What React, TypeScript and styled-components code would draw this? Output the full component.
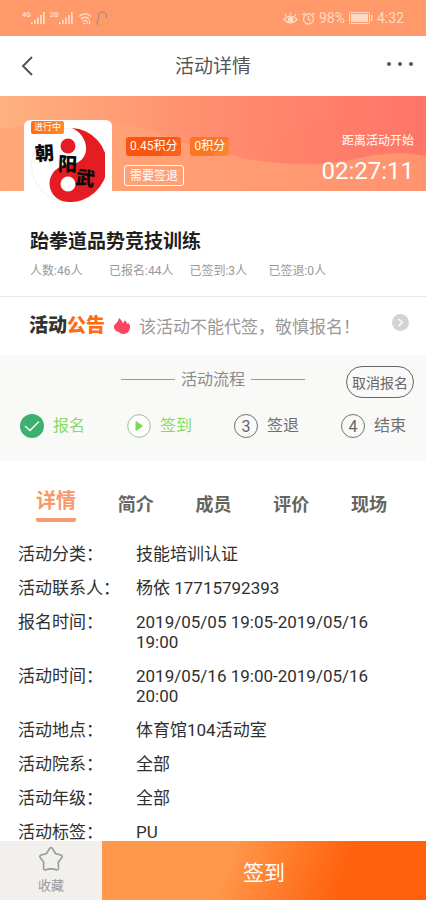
import React from 'react';
import styled, { createGlobalStyle } from 'styled-components';

const Global = createGlobalStyle`
  * { box-sizing: border-box; }
  body { margin: 0; background: #fff; }
  body, button { font-family: Roboto, "Noto Sans CJK SC", sans-serif; }
  button { border: 0; padding: 0; background: none; cursor: pointer; }
  h1, h2, p, dl, dd, dt, ol, ul { margin: 0; padding: 0; }
  svg { display: block; flex: none; }
`;

const Screen = styled.div`
  height: 100vh;
  display: flex;
  flex-direction: column;
`;

const StatusBar = styled.div`
  flex: none;
  display: flex;
  justify-content: space-between;
  align-items: center;
  height: 36px;
  padding: 0 22px;
  background: #ff996a;
  color: #ffd9c2;
  font-size: 14px;
  line-height: 20px;
`;

const StatusGroup = styled.div<{ $gap: number }>`
  display: flex;
  align-items: center;
  gap: ${(p) => p.$gap}px;
`;

const Signal = styled.span`
  display: flex;
  align-items: flex-start;
  font-size: 7px;
  line-height: 8px;
  font-weight: 700;
`;

const Header = styled.header`
  flex: none;
  display: grid;
  grid-template-columns: 60px 1fr 60px;
  align-items: center;
  height: 60px;
  padding: 0 12px;
  color: #555;
`;

const Title = styled.h1`
  padding-top: 2px;
  text-align: center;
  font-size: 19px;
  line-height: 28px;
  font-weight: 400;
`;

const IconButton = styled.button<{ $end?: boolean }>`
  display: flex;
  justify-content: ${(p) => (p.$end ? 'flex-end' : 'flex-start')};
  padding: 8px 0;
  color: #555;
`;

const Content = styled.main`
  flex: 1;
  min-height: 0;
  overflow-y: auto;
  scrollbar-width: none;
`;

const Banner = styled.section`
  position: relative;
  display: flex;
  align-items: flex-start;
  height: 95px;
  padding: 24px 12px 0 24px;
  color: #fff;
`;

const Waves = styled.svg`
  position: absolute;
  inset: 0;
  width: 100%;
  height: 100%;
`;

const Cover = styled.div`
  position: relative;
  flex: none;
  width: 88px;
  height: 88px;
  padding: 8px 7px;
  border-radius: 6px;
  background: #fff;
`;

const StateTag = styled.span`
  position: absolute;
  top: 1px;
  left: 7px;
  width: 33px;
  height: 13px;
  border-radius: 2px;
  background: linear-gradient(90deg, #ff6c14, #ff8a2c);
  font-size: 9px;
  line-height: 13px;
  text-align: center;
`;

const Badges = styled.div`
  position: relative;
  flex: 1;
  display: grid;
  justify-items: start;
  gap: 9px;
  padding: 17px 0 0 12px;
`;

const Credits = styled.div`
  display: flex;
  gap: 9px;
  padding-left: 2px;
`;

const Credit = styled.span<{ $from: string; $to: string }>`
  height: 19px;
  padding: 0 4px;
  border-radius: 3px;
  background: linear-gradient(135deg, ${(p) => p.$from} 70%, ${(p) => p.$to} 71%);
  font-size: 12px;
  line-height: 19px;
  white-space: nowrap;
`;

const Requirement = styled.span`
  height: 21px;
  padding: 0 5px;
  border: 1px solid #fff;
  border-radius: 3px;
  font-size: 12px;
  line-height: 20px;
`;

const Countdown = styled.div`
  position: relative;
  text-align: right;
  padding-top: 12px;
  font-size: 12px;
  line-height: 18px;
`;

const Time = styled.div`
  font-size: 24px;
  line-height: 28px;
  padding-top: 7px;
`;

const Summary = styled.section`
  padding: 37px 30px 16px;
  border-bottom: 1px solid #e9e9e9;
`;

const ActivityName = styled.h2`
  color: #1f1f1f;
  font-size: 19px;
  line-height: 28px;
  font-weight: 700;
`;

const Counts = styled.ul`
  display: flex;
  gap: 16px;
  padding-top: 6px;
  list-style: none;
  color: #999;
  font-size: 12px;
  line-height: 18px;
`;

const Count = styled.li`
  min-width: 63px;
`;

const Notice = styled.section`
  display: flex;
  align-items: center;
  height: 58px;
  padding: 0 17px 0 29px;
  color: #999;
`;

const NoticeTitle = styled.strong`
  color: #333;
  font-size: 19px;
  line-height: 28px;
  font-weight: 900;
  em { color: #ff6b12; font-style: normal; }
`;

const NoticeText = styled.p`
  flex: 1;
  padding: 2px 0 0 8px;
  font-size: 17px;
  line-height: 24px;
`;

const Flow = styled.section`
  padding: 10px 12px 23px;
  background: #f9f9f8;
`;

const FlowHead = styled.div`
  display: grid;
  grid-template-columns: 68px 1fr 68px;
  align-items: center;
`;

const FlowTitle = styled.div`
  grid-column: 2;
  display: flex;
  justify-content: center;
  align-items: center;
  gap: 6px;
  padding-bottom: 4px;
  color: #8a8a8a;
  font-size: 16px;
  line-height: 24px;
  &::before, &::after {
    content: "";
    width: 54px;
    height: 1px;
    background: #999;
  }
`;

const CancelButton = styled.button`
  height: 32px;
  margin: 1px 0 0;
  border: 1px solid #666;
  border-radius: 16px;
  color: #666;
  font-size: 14px;
  white-space: nowrap;
`;

const Steps = styled.ol`
  display: flex;
  justify-content: space-between;
  padding: 16px 8px 0;
  list-style: none;
`;

const Step = styled.li<{ $active?: boolean }>`
  display: flex;
  align-items: center;
  gap: 9px;
  color: ${(p) => (p.$active ? '#86dc60' : '#707070')};
  font-size: 16px;
  line-height: 24px;
`;

const StepMark = styled.span`
  display: grid;
  place-items: center;
  width: 24px;
  height: 24px;
  border: 1px solid #707070;
  border-radius: 50%;
  color: #666;
`;

const Tabs = styled.nav`
  display: flex;
  justify-content: space-between;
  align-items: center;
  padding: 24px 39px 0 36px;
`;

const Tab = styled.button<{ $active?: boolean }>`
  height: 37px;
  border-bottom: 4px solid ${(p) => (p.$active ? '#f49a70' : 'transparent')};
  border-radius: 2px;
  padding: ${(p) => (p.$active ? '0 0 2px' : '7px 0 0')};
  color: ${(p) => (p.$active ? '#f7996b' : '#66655d')};
  font-size: ${(p) => (p.$active ? 20 : 18)}px;
  line-height: 26px;
  font-weight: 700;
`;

const Details = styled.dl`
  display: grid;
  gap: 14px;
  padding: 22px 18px 14px;
  color: #303030;
  font-size: 17px;
  line-height: 20px;
`;

const Detail = styled.div`
  display: grid;
  grid-template-columns: 118px 1fr;
  dt { white-space: nowrap; }
`;

const Footer = styled.footer`
  flex: none;
  display: grid;
  grid-template-columns: 24% 1fr;
  height: 59px;
`;

const FavoriteButton = styled.button`
  display: flex;
  flex-direction: column;
  align-items: center;
  gap: 4px;
  padding-top: 5px;
  background: #f1f0ed;
  color: #999;
  font-size: 13px;
  line-height: 20px;
`;

const SignButton = styled.button`
  background: linear-gradient(110deg, #ff984b 38%, #ff610c 74%);
  color: #fff;
  font-size: 21px;
`;

const SignalBars = () => (
  <svg width="15" height="14" viewBox="0 0 15 14" fill="currentColor">
    <path d="M0 11h1.600v2H0zM3 9h1.800v4H3zM6 6.500h1.800V13H6zM9 4h1.800v9H9zM12 1h1.800v12H12z" />
  </svg>
);

const YinYang = () => (
  <svg width="74" height="74" viewBox="0 0 74 74" role="img" aria-label="朝阳武">
    <circle cx="37" cy="37" r="36.500" fill="#fff" stroke="#f3f1f1" />
    <path d="M41 0A37 37 0 0 1 37 74A18.500 18.500 0 0 1 37 37C62 35 59 8 41 0Z" fill="#e51d23" />
    <circle cx="37" cy="18" r="7.500" fill="#e51d23" />
    <circle cx="37" cy="56" r="7.500" fill="#fff" />
    <g fill="#0b0b0b" fontFamily='"Noto Sans CJK SC", sans-serif' fontWeight="900" fontSize="19">
      <text x="4" y="32" transform="rotate(-4 14 25)">朝</text>
      <text x="27" y="43" transform="rotate(3 36 36)">阳</text>
      <text x="45" y="57" transform="rotate(8 54 50)">武</text>
    </g>
  </svg>
);

const details = [
  ['活动分类：', '技能培训认证'],
  ['活动联系人：', '杨依 17715792393'],
  ['报名时间：', '2019/05/05 19:05-2019/05/16 19:00'],
  ['活动时间：', '2019/05/16 19:00-2019/05/16 20:00'],
  ['活动地点：', '体育馆104活动室'],
  ['活动院系：', '全部'],
  ['活动年级：', '全部'],
  ['活动标签：', 'PU'],
];

export default function App() {
  return (
    <Screen>
      <Global />
      <StatusBar>
        <StatusGroup $gap={4}>
          <Signal>4G<SignalBars /></Signal>
          <Signal>2G<SignalBars /></Signal>
          <svg width="14" height="14" viewBox="0 0 14 14" fill="none" stroke="currentColor" strokeWidth="1.400">
            <path d="M1 5.500Q7 0 13 5.500M2.800 8Q7 4.500 11.200 8M4.500 10.200Q7 8.500 9 10.200" />
            <path d="M9 13V9.500M11.500 9.500V13" strokeWidth="1.200" />
            <circle cx="6" cy="12.400" r="1" fill="currentColor" stroke="none" />
          </svg>
          <svg width="14" height="15" viewBox="0 0 14 15" fill="none">
            <path d="M3 13Q1 14 1 11.500Q1 9 2.500 7.500Q2 1 6.500 1Q11 1 10.500 7" stroke="#a0807c" />
            <path d="M5 13Q7 9 10.500 8L13.500 12Q10 15 5 13Z" fill="#eda555" />
          </svg>
        </StatusGroup>
        <StatusGroup $gap={4}>
          <svg width="15" height="13" viewBox="0 0 15 13" fill="none" stroke="currentColor" strokeWidth="1.200">
            <path d="M1 7.500Q7.500 .5 14 7.500Q7.500 14.500 1 7.500ZM7.500 3V.5M3.500 4.500 2 2M11.500 4.500 13 2" />
            <circle cx="7.500" cy="7.500" r="2.300" fill="currentColor" />
          </svg>
          <svg width="13" height="13" viewBox="0 0 13 13" fill="none" stroke="currentColor" strokeWidth="1.300">
            <circle cx="6.500" cy="7" r="5" /><path d="M6.500 4v3.500l2 1.500M.7 3 3 1M12.300 3 10 1" />
          </svg>
          98%
          <svg width="24" height="12" viewBox="0 0 24 12" fill="currentColor">
            <rect x=".5" y=".5" width="20" height="11" rx="1" fill="none" stroke="currentColor" />
            <path d="M2 2h17v8H2zM22 3h1.500v6H22z" />
          </svg>
          4:32
        </StatusGroup>
      </StatusBar>

      <Header>
        <IconButton aria-label="返回">
          <svg width="24" height="20" viewBox="0 0 24 20" fill="none" stroke="currentColor" strokeWidth="2">
            <path d="M20 1 11 10 20 19" />
          </svg>
        </IconButton>
        <Title>活动详情</Title>
        <IconButton $end aria-label="更多">
          <svg width="28" height="10" viewBox="0 0 28 10" fill="currentColor">
            <circle cx="3" cy="3" r="2" /><circle cx="14" cy="3" r="2" /><circle cx="25" cy="3" r="2" />
          </svg>
        </IconButton>
      </Header>

      <Content>
        <Banner>
          <Waves viewBox="0 0 426 95" preserveAspectRatio="none" aria-hidden="true">
            <defs>
              <linearGradient id="sky" x1="0" x2="1"><stop offset="0" stopColor="#ffb17e" /><stop offset=".5" stopColor="#ff8d6f" /><stop offset="1" stopColor="#ff7468" /></linearGradient>
              <linearGradient id="hill" x1="0" x2="1"><stop offset="0" stopColor="#ff866b" /><stop offset="1" stopColor="#ff7568" /></linearGradient>
              <linearGradient id="sand" x1="0" x2="1" y1="0" y2="0"><stop offset="0" stopColor="#ffa777" /><stop offset="1" stopColor="#ff9370" /></linearGradient>
            </defs>
            <path d="M0 0H426V95H0Z" fill="url(#sky)" />
            <path d="M255 66C285 35 310 25 345 24C385 25 405 35 426 48V95H255Z" fill="url(#hill)" />
            <path d="M0 33C40 27 80 22 118 27C155 33 190 52 230 59C265 68 310 72 350 64C380 57 400 55 426 60V95H0Z" fill="url(#sand)" />
          </Waves>
          <Cover>
            <YinYang />
            <StateTag>进行中</StateTag>
          </Cover>
          <Badges>
            <Credits>
              <Credit $from="#fb5410" $to="#fc6020">0.45积分</Credit>
              <Credit $from="#fc7524" $to="#fb8434">0积分</Credit>
            </Credits>
            <Requirement>需要签退</Requirement>
          </Badges>
          <Countdown>
            距离活动开始
            <Time>02:27:11</Time>
          </Countdown>
        </Banner>

        <Summary>
          <ActivityName>跆拳道品势竞技训练</ActivityName>
          <Counts>
            <Count>人数:46人</Count>
            <Count>已报名:44人</Count>
            <Count>已签到:3人</Count>
            <Count>已签退:0人</Count>
          </Counts>
        </Summary>

        <Notice>
          <NoticeTitle>活动<em>公告</em></NoticeTitle>
          <svg width="26" height="18" viewBox="0 0 26 18">
            <path d="M14 1Q17 3 18 6.500Q18.500 4.500 20 3.500Q22 5 22.300 7Q23 6.500 23.500 6Q26 9 24.500 13Q23 16.500 19 17Q16 17.500 14 15Q10 14 9 11Q8.500 8 11 6.500Q13.500 4.500 14 1Z" fill="#fb4562" />
          </svg>
          <NoticeText>该活动不能代签，敬慎报名！</NoticeText>
          <IconButton aria-label="查看公告">
            <svg width="17" height="24" viewBox="0 0 17 24" fill="none">
              <circle cx="8.500" cy="8.500" r="8.500" fill="#d3d3d3" />
              <path d="m6.500 5 4 3.500-4 3.500" stroke="#fff" strokeWidth="1.500" />
            </svg>
          </IconButton>
        </Notice>

        <Flow>
          <FlowHead>
            <FlowTitle>活动流程</FlowTitle>
            <CancelButton>取消报名</CancelButton>
          </FlowHead>
          <Steps>
            <Step $active>
              <svg width="24" height="24" viewBox="0 0 24 24" fill="none">
                <circle cx="12" cy="12" r="12" fill="#3db06f" /><path d="m5 12 5 4.500 9-9" stroke="#fff" strokeWidth="1.300" />
              </svg>
              报名
            </Step>
            <Step $active>
              <svg width="24" height="24" viewBox="0 0 24 24">
                <circle cx="12" cy="12" r="11.300" fill="#fff" stroke="#9cc48e" /><path d="M9 7.500v9l6.500-4.500Z" fill="#79dc50" stroke="#79dc50" strokeLinejoin="round" />
              </svg>
              签到
            </Step>
            <Step><StepMark>3</StepMark>签退</Step>
            <Step><StepMark>4</StepMark>结束</Step>
          </Steps>
        </Flow>

        <Tabs>
          <Tab $active>详情</Tab>
          <Tab>简介</Tab>
          <Tab>成员</Tab>
          <Tab>评价</Tab>
          <Tab>现场</Tab>
        </Tabs>

        <Details>
          {details.map(([label, value]) => (
            <Detail key={label}>
              <dt>{label}</dt>
              <dd>{value}</dd>
            </Detail>
          ))}
        </Details>
      </Content>

      <Footer>
        <FavoriteButton>
          <svg width="26" height="26" viewBox="0 0 26 26" fill="none" stroke="currentColor" strokeWidth="1.600" strokeLinejoin="round">
            <path d="M11.800 2.200Q13 1 14.200 2.200L17.500 7.500L23.300 9.200Q24.800 10 23.800 11.500L20.300 16.300L20.500 22.500Q20.300 24.200 18.700 23.900Q13 21.800 7.300 23.900Q5.700 24.200 5.500 22.500L5.700 16.300L2.200 11.500Q1.200 10 2.700 9.200L8.500 7.500Z" />
          </svg>
          收藏
        </FavoriteButton>
        <SignButton>签到</SignButton>
      </Footer>
    </Screen>
  );
}
